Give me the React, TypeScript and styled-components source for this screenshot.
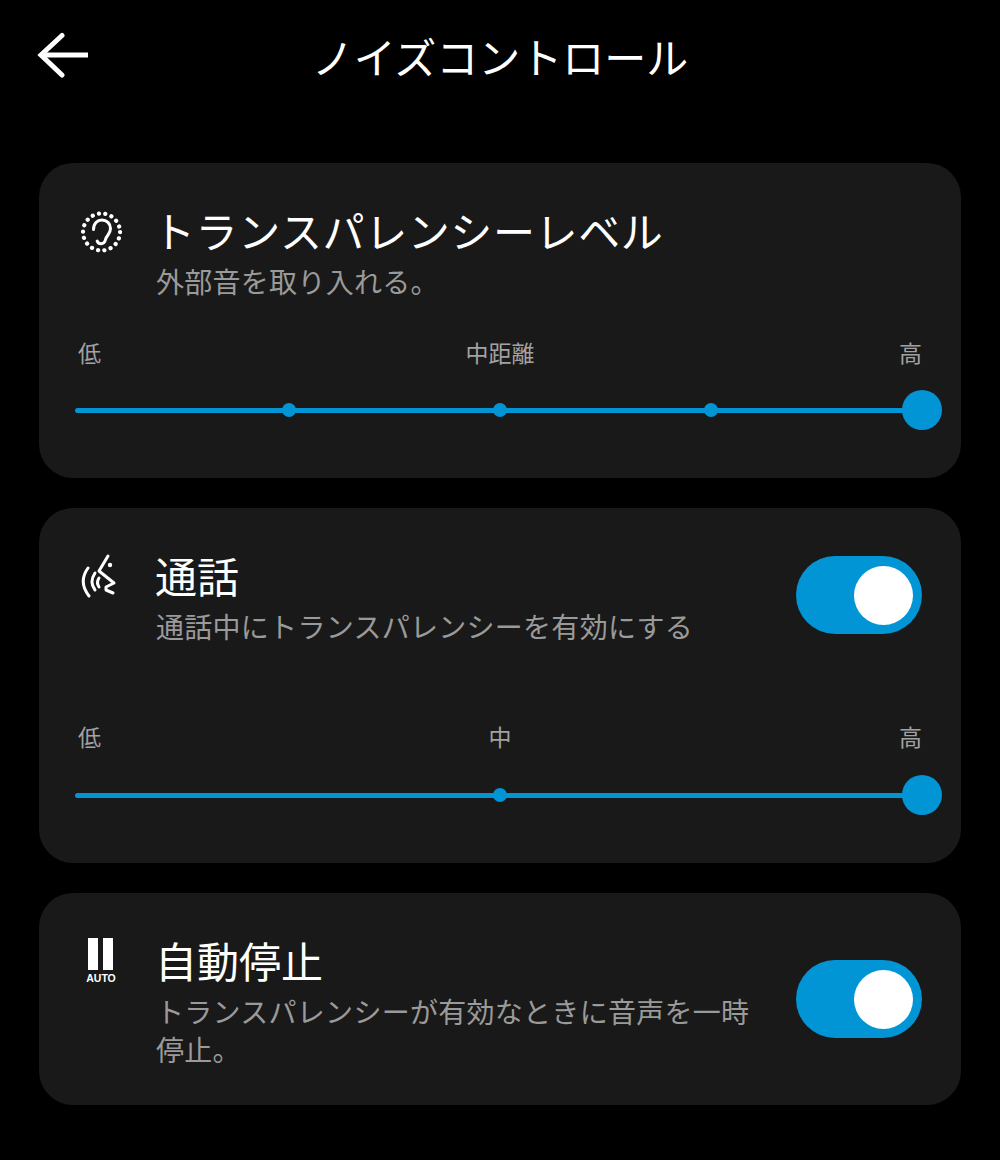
import React from 'react'
import styled, { createGlobalStyle } from 'styled-components'

const Global = createGlobalStyle`
  html, body {
    margin: 0;
    background: #000;
    color: #fff;
    font-family: "Noto Sans CJK JP", "Noto Sans", sans-serif;
  }
`

const Page = styled.div`
  width: 1000px;
  height: 1160px;
  box-sizing: border-box;
  padding: 0 39px;
  background: #000;
  overflow: hidden;
`

const TopBar = styled.header`
  height: 163px;
  display: grid;
  grid-template-columns: 1fr auto 1fr;
  align-items: start;
  padding-top: 32px;
  box-sizing: border-box;
`

const BackButton = styled.div`
  width: 52px;
  height: 46px;
  margin-left: -2px;
  display: flex;
`

const PageTitle = styled.h1`
  margin: 0;
  font-size: 42px;
  line-height: 48px;
  font-weight: 400;
`

const Cards = styled.main`
  display: flex;
  flex-direction: column;
  gap: 30px;
`

const Card = styled.section<{ $height: number }>`
  height: ${p => p.$height}px;
  box-sizing: border-box;
  background: #191919;
  border-radius: 34px;
  padding-top: 40px;
`

const Header = styled.div`
  display: grid;
  grid-template-columns: 116px 1fr auto;
  padding-right: 39px;
`

const IconBox = styled.div<{ $top: number }>`
  padding: ${p => p.$top}px 0 0 41px;
  height: 46px;
`

const Title = styled.h2<{ $spread?: boolean }>`
  margin: 0 0 0 ${p => (p.$spread ? '-2px' : '0')};
  font-size: 42px;
  line-height: 54px;
  font-weight: 400;
  letter-spacing: ${p => (p.$spread ? '0.6px' : '0')};
`

const Desc = styled.p`
  margin: 5px 0 0;
  padding-left: 1px;
  width: 604px;
  font-size: 28px;
  line-height: 38px;
  letter-spacing: 0.28px;
  color: #9a9a9a;
`

const Toggle = styled.div<{ $top: number }>`
  width: 126px;
  height: 78px;
  margin-top: ${p => p.$top}px;
  border-radius: 39px;
  background: #0295d6;
  display: flex;
  justify-content: flex-end;
  align-items: center;
  padding-right: 9px;
  box-sizing: border-box;
`

const Knob = styled.div`
  width: 59px;
  height: 59px;
  border-radius: 50%;
  background: #fff;
`

const SliderBlock = styled.div<{ $top: number }>`
  margin-top: ${p => p.$top}px;
`

const Labels = styled.div`
  display: grid;
  grid-template-columns: 1fr auto 1fr;
  padding: 0 39px;
  font-size: 23px;
  line-height: 32px;
  color: #a2a2a2;
`

const EndLabel = styled.span`
  text-align: right;
`

const Track = styled.div<{ $gap: number }>`
  position: relative;
  height: 40px;
  margin: ${p => p.$gap}px 39px 0 36px;
  display: flex;
  align-items: center;
`

const Line = styled.div`
  width: 100%;
  height: 5px;
  border-radius: 3px;
  background: #0295d6;
`

const Tick = styled.span`
  position: absolute;
  top: 13px;
  width: 14px;
  height: 14px;
  margin-left: -7px;
  border-radius: 50%;
  background: #0295d6;
`

const Thumb = styled.span`
  position: absolute;
  top: 0;
  right: -20px;
  width: 40px;
  height: 40px;
  border-radius: 50%;
  background: #0295d6;
`

const BackArrow = () => (
  <svg width="52" height="46" viewBox="0 0 52 46" fill="none" stroke="#fff" strokeWidth="5">
    <path d="M51 23H5" />
    <path d="M25 3.500L4 23L25 43" strokeLinecap="round" />
  </svg>
)

const EarIcon = () => (
  <svg width="42" height="42" viewBox="0 0 42 42" fill="none" stroke="#fff">
    <circle cx="21.500" cy="21" r="18.500" strokeWidth="4.200" strokeDasharray="0.1 6.360" strokeLinecap="round" />
    <path
      d="M13.500 18.500c0-6 3.800-9.500 8.300-9.500 5 0 8.700 3.600 8.700 8.600 0 5.400-3.800 6.600-4.800 10.400-.7 3-2.300 4.700-4.700 4.700-1.900 0-3.200-1-3.800-2.600"
      strokeWidth="3"
      strokeLinecap="round"
    />
  </svg>
)

const CallIcon = () => (
  <svg width="38" height="46" viewBox="0 0 38 46" fill="none" stroke="#fff" strokeWidth="3" strokeLinecap="round" strokeLinejoin="round">
    <path d="M8 15Q-2 29 9 43" />
    <path d="M15 20Q9 29 15 37" />
    <path d="M19 25Q16 29.500 19 34" />
    <path d="M28 3L19 18L34 30L26 34V37L33 40" />
    <circle cx="30" cy="12" r="2.200" fill="#fff" stroke="none" />
  </svg>
)

const AutoPauseIcon = () => (
  <svg width="36" height="46" viewBox="0 0 36 46" fill="#fff">
    <rect x="8" y="0" width="10" height="32" />
    <rect x="23" y="0" width="10" height="32" />
    <text x="21" y="44" textAnchor="middle" fontSize="10.500" fontWeight="700" fontFamily="'Liberation Sans', sans-serif">
      AUTO
    </text>
  </svg>
)

const Slider: React.FC<{ labels: string[]; ticks: number[]; top: number; gap: number }> = ({ labels, ticks, top, gap }) => (
  <SliderBlock $top={top}>
    <Labels>
      <span>{labels[0]}</span>
      <span>{labels[1]}</span>
      <EndLabel>{labels[2]}</EndLabel>
    </Labels>
    <Track $gap={gap}>
      <Line />
      {ticks.map(t => (
        <Tick key={t} style={{ left: `${t}%` }} />
      ))}
      <Thumb />
    </Track>
  </SliderBlock>
)

export default function App() {
  return (
    <Page>
      <Global />
      <TopBar>
        <BackButton>
          <BackArrow />
        </BackButton>
        <PageTitle>ノイズコントロール</PageTitle>
      </TopBar>
      <Cards>
        <Card $height={315}>
          <Header>
            <IconBox $top={8}>
              <EarIcon />
            </IconBox>
            <div>
              <Title $spread>トランスパレンシーレベル</Title>
              <Desc>外部音を取り入れる。</Desc>
            </div>
          </Header>
          <Slider labels={['低', '中距離', '高']} ticks={[25.27, 50.18, 75.09]} top={36} gap={22} />
        </Card>
        <Card $height={355}>
          <Header>
            <IconBox $top={5}>
              <CallIcon />
            </IconBox>
            <div>
              <Title>通話</Title>
              <Desc>通話中にトランスパレンシーを有効にする</Desc>
            </div>
            <Toggle $top={8}>
              <Knob />
            </Toggle>
          </Header>
          <Slider labels={['低', '中', '高']} ticks={[50.18]} top={75} gap={23} />
        </Card>
        <Card $height={212}>
          <Header>
            <IconBox $top={5}>
              <AutoPauseIcon />
            </IconBox>
            <div>
              <Title>自動停止</Title>
              <Desc>トランスパレンシーが有効なときに音声を一時停止。</Desc>
            </div>
            <Toggle $top={27}>
              <Knob />
            </Toggle>
          </Header>
        </Card>
      </Cards>
    </Page>
  )
}
